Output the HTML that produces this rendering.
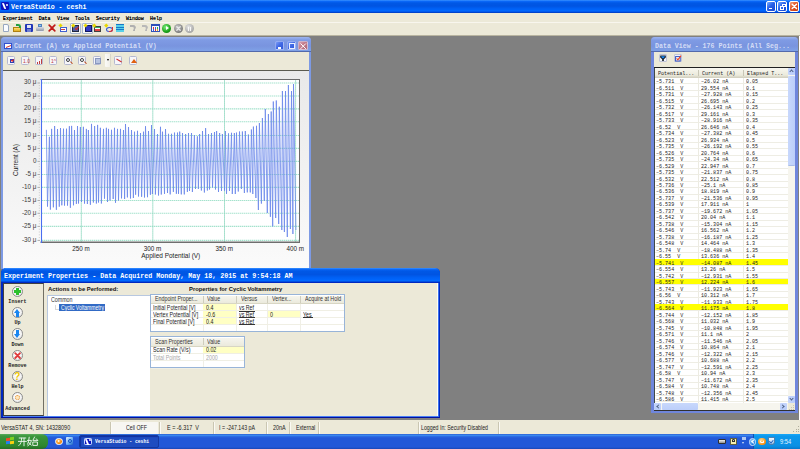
<!DOCTYPE html><html><head><meta charset="utf-8"><style>
*{margin:0;padding:0;box-sizing:border-box}
html,body{width:800px;height:449px;overflow:hidden;background:#808080;font-family:"Liberation Sans",sans-serif}
.a{position:absolute}
.mono{font-family:"Liberation Mono",monospace}
.t{white-space:pre;position:absolute;line-height:1}
</style></head><body>

<div class="a" style="left:0;top:0;width:800px;height:13px;background:linear-gradient(#3d94ff 0,#0a68f8 1.3px,#0058e6 3px,#0054e2 6px,#0060f4 8.5px,#0068ff 11px,#0048d8 12.2px,#0038b8 13px)"></div>
<div class="t mono" style="left:11.00px;top:3.71px;font-size:6.62px;color:#fff;font-weight:bold;transform:scaleX(1.0);transform-origin:0 0;">VersaStudio - ceshi</div>
<div class="a" style="left:0;top:13px;width:800px;height:23px;background:#ece9d8"></div>
<div class="a" style="left:0;top:22px;width:800px;height:1px;background:#f8f6ee"></div>
<div class="t mono" style="left:3.00px;top:16.54px;font-size:4.95px;color:#000;font-weight:400;transform:scaleX(1.0);transform-origin:0 0;text-shadow:0 0 0.3px #000">Experiment</div>
<div class="t mono" style="left:38.70px;top:16.54px;font-size:4.95px;color:#000;font-weight:400;transform:scaleX(1.0);transform-origin:0 0;text-shadow:0 0 0.3px #000">Data</div>
<div class="t mono" style="left:57.00px;top:16.54px;font-size:4.95px;color:#000;font-weight:400;transform:scaleX(1.0);transform-origin:0 0;text-shadow:0 0 0.3px #000">View</div>
<div class="t mono" style="left:75.00px;top:16.54px;font-size:4.95px;color:#000;font-weight:400;transform:scaleX(1.0);transform-origin:0 0;text-shadow:0 0 0.3px #000">Tools</div>
<div class="t mono" style="left:96.00px;top:16.54px;font-size:4.95px;color:#000;font-weight:400;transform:scaleX(1.0);transform-origin:0 0;text-shadow:0 0 0.3px #000">Security</div>
<div class="t mono" style="left:126.00px;top:16.54px;font-size:4.95px;color:#000;font-weight:400;transform:scaleX(1.0);transform-origin:0 0;text-shadow:0 0 0.3px #000">Window</div>
<div class="t mono" style="left:150.00px;top:16.54px;font-size:4.95px;color:#000;font-weight:400;transform:scaleX(1.0);transform-origin:0 0;text-shadow:0 0 0.3px #000">Help</div>
<div class="a" style="left:0;top:36px;width:800px;height:384px;background:#808080"></div>
<div class="a" style="left:799px;top:36px;width:1px;height:384px;background:#fff"></div>
<div class="a" style="left:0;top:420px;width:800px;height:13px;background:#ece9d8"></div>
<div class="a" style="left:1px;top:37px;width:310px;height:232px;background:#7d9ae4;border-radius:4px 4px 0 0"></div>
<div class="a" style="left:1px;top:37px;width:310px;height:15px;border-radius:4px 4px 0 0;background:linear-gradient(#9db4ee,#7f9be4 20%,#7994df 60%,#7ea0e6 90%,#3e4f8e)"></div>
<div class="a" style="left:4px;top:43px;width:8px;height:6px;background:#fff;border:1px solid #3050d0"></div>
<div class="a" style="left:6px;top:45px;width:5px;height:2px;border-bottom:1px solid #d03030;transform:skewY(-20deg)"></div>
<div class="t mono" style="left:14.00px;top:42.91px;font-size:6.62px;color:#d4ddf6;font-weight:bold;transform:scaleX(1.0);transform-origin:0 0;">Current (A) vs Applied Potential (V)</div>
<div class="a" style="left:274.6px;top:41.1px;width:9.6px;height:9px;border-radius:1.5px;border:0.6px solid rgba(220,230,255,.55);background:linear-gradient(135deg,#7c9cf4,#4068e4 50%,#3058d8)"><div class="a" style="left:2.3px;top:5.2px;width:3.4px;height:1.5px;background:#fff"></div></div>
<div class="a" style="left:286.6px;top:41.1px;width:9.6px;height:9px;border-radius:1.5px;border:0.6px solid rgba(220,230,255,.55);background:linear-gradient(135deg,#7c9cf4,#4068e4 50%,#3058d8)"><div class="a" style="left:1.6px;top:1.4px;width:5.6px;height:5.6px;border:0.8px solid #e8eeff;border-top-width:1.6px"></div></div>
<div class="a" style="left:298.1px;top:41.1px;width:9.6px;height:9px;border-radius:1.5px;border:0.6px solid rgba(220,230,255,.55);background:linear-gradient(135deg,#d8a0b0,#c07888 50%,#b06878)"><svg class="a" style="left:0px;top:0px" width="8.4" height="8.4" viewBox="0 0 8.4 8.4"><path d="M1.8 1.8 L6.6000000000000005 6.6000000000000005 M6.6000000000000005 1.8 L1.8 6.6000000000000005" stroke="#fff" stroke-width="1.0" stroke-linecap="round"/></svg></div>
<div class="a" style="left:3px;top:52px;width:306px;height:19px;background:#ece9d8;border-bottom:1px solid #5a5a50"></div>
<div class="a" style="left:3px;top:71px;width:306px;height:198px;background:linear-gradient(#e9e9e9,#f3f3f3 60%,#fbfbfb)"></div>
<div class="a" style="left:7px;top:56.4px;width:8.2px;height:8.2px;border:1px solid #b4b8d0;border-radius:1.5px;background:#f6f6fa"><div class="a" style="left:1.5px;top:2px;width:4px;height:4px;border:1px solid #3040b0;background:#fff"></div><div class="a" style="left:3px;top:1.5px;width:3px;height:2px;border-left:1px solid #e02020;border-bottom:1px solid #e02020;transform:rotate(-45deg)"></div></div>
<div class="a" style="left:21px;top:56.4px;width:8.2px;height:8.2px;border:1px solid #b4b8d0;border-radius:1.5px;background:#f6f6fa"><div class="a" style="left:1px;top:1.5px;width:6px;height:5px;color:#c04040;font-size:5px;line-height:5px;font-family:Liberation Sans">1.0</div></div>
<div class="a" style="left:35px;top:56.4px;width:8.2px;height:8.2px;border:1px solid #b4b8d0;border-radius:1.5px;background:#f6f6fa"><div class="a" style="left:1px;top:5px;width:1.2px;height:1.5px;background:#c04040"></div><div class="a" style="left:3px;top:4px;width:1.2px;height:2.5px;background:#c04040"></div><div class="a" style="left:5px;top:2px;width:1.2px;height:4.5px;background:#c04040"></div></div>
<div class="a" style="left:49px;top:56.4px;width:8.2px;height:8.2px;border:1px solid #b4b8d0;border-radius:1.5px;background:#f6f6fa"><div class="a" style="left:1px;top:1.5px;width:6px;height:5px;color:#c04040;font-size:5px;line-height:5px;font-family:Liberation Sans">1^</div></div>
<div class="a" style="left:64px;top:56.4px;width:8.2px;height:8.2px;border:1px solid #b4b8d0;border-radius:1.5px;background:#f6f6fa"><div class="a" style="left:1px;top:1px;width:4px;height:4px;border:1px solid #404040;border-radius:50%;background:#e8f0ff"></div><div class="a" style="left:4.5px;top:4.5px;width:2.5px;height:1.2px;background:#c05020;transform:rotate(45deg)"></div></div>
<div class="a" style="left:78px;top:56.4px;width:8.2px;height:8.2px;border:1px solid #b4b8d0;border-radius:1.5px;background:#f6f6fa"><div class="a" style="left:1px;top:1px;width:4px;height:4px;border:1px solid #404040;border-radius:50%;background:#fff"></div><div class="a" style="left:4.5px;top:4.5px;width:2.5px;height:1.2px;background:#c05020;transform:rotate(45deg)"></div></div>
<div class="a" style="left:93px;top:56.4px;width:8.2px;height:8.2px;border:1px solid #b4b8d0;border-radius:1.5px;background:#f6f6fa"><div class="a" style="left:0.5px;top:0.5px;width:6px;height:6px;background:#b8c4e0;border:0.5px solid #8898c0"></div></div>
<div class="a" style="left:114px;top:56.4px;width:8.2px;height:8.2px;border:1px solid #b4b8d0;border-radius:1.5px;background:#f6f6fa"><div class="a" style="left:1px;top:2.5px;width:6px;height:1.2px;background:#d03030;transform:rotate(30deg)"></div></div>
<div class="a" style="left:129px;top:56.4px;width:8.2px;height:8.2px;border:1px solid #b4b8d0;border-radius:1.5px;background:#f6f6fa"><div class="a" style="left:1px;top:2px;width:0;height:0;border-left:3px solid transparent;border-right:3px solid transparent;border-bottom:4px solid #e06010"></div></div>
<div class="a" style="left:105px;top:53.8px;width:5.7px;height:13.6px;background:linear-gradient(90deg,#fbfbf8,#f0efe8);border-right:1px solid #d8d6c8;border-radius:0 0 1px 1px"></div>
<div class="a" style="left:107px;top:59px;width:0;height:0;border-left:1.5px solid transparent;border-right:1.5px solid transparent;border-top:2px solid #000"></div>
<svg class="a" style="left:0;top:0" width="800" height="449" viewBox="0 0 800 449"><rect x="40.5" y="79" width="259.5" height="164" fill="#fff"/><line x1="42.3" y1="83.0" x2="299" y2="83.0" stroke="#7fd6b8" stroke-width="1.1" stroke-dasharray="1 1"/><line x1="42.3" y1="96.0" x2="299" y2="96.0" stroke="#7fd6b8" stroke-width="1.1" stroke-dasharray="1 1"/><line x1="42.3" y1="108.9" x2="299" y2="108.9" stroke="#7fd6b8" stroke-width="1.1" stroke-dasharray="1 1"/><line x1="42.3" y1="121.8" x2="299" y2="121.8" stroke="#7fd6b8" stroke-width="1.1" stroke-dasharray="1 1"/><line x1="42.3" y1="135.5" x2="299" y2="135.5" stroke="#7fd6b8" stroke-width="1.1" stroke-dasharray="1 1"/><line x1="42.3" y1="148.4" x2="299" y2="148.4" stroke="#7fd6b8" stroke-width="1.1" stroke-dasharray="1 1"/><line x1="42.3" y1="161.4" x2="299" y2="161.4" stroke="#7fd6b8" stroke-width="1.1" stroke-dasharray="1 1"/><line x1="42.3" y1="174.5" x2="299" y2="174.5" stroke="#7fd6b8" stroke-width="1.1" stroke-dasharray="1 1"/><line x1="42.3" y1="187.4" x2="299" y2="187.4" stroke="#7fd6b8" stroke-width="1.1" stroke-dasharray="1 1"/><line x1="42.3" y1="200.45" x2="299" y2="200.45" stroke="#7fd6b8" stroke-width="1.1" stroke-dasharray="1 1"/><line x1="42.3" y1="213.3" x2="299" y2="213.3" stroke="#7fd6b8" stroke-width="1.1" stroke-dasharray="1 1"/><line x1="42.3" y1="226.4" x2="299" y2="226.4" stroke="#7fd6b8" stroke-width="1.1" stroke-dasharray="1 1"/><line x1="42.3" y1="240.4" x2="299" y2="240.4" stroke="#7fd6b8" stroke-width="1.1" stroke-dasharray="1 1"/><line x1="81.3" y1="80.3" x2="81.3" y2="242" stroke="#8ed8bf" stroke-width="1" stroke-dasharray="1.5 0.5"/><line x1="152.8" y1="80.3" x2="152.8" y2="242" stroke="#8ed8bf" stroke-width="1" stroke-dasharray="1.5 0.5"/><line x1="224.5" y1="80.3" x2="224.5" y2="242" stroke="#8ed8bf" stroke-width="1" stroke-dasharray="1.5 0.5"/><line x1="295.6" y1="80.3" x2="295.6" y2="242" stroke="#8ed8bf" stroke-width="1" stroke-dasharray="1.5 0.5"/><polyline points="46.40,129.80 47.50,206.60 49.40,136.80 50.40,209.60 51.60,128.90 53.40,207.30 54.60,126.00 56.40,209.80 57.50,129.00 59.30,206.70 60.50,128.00 61.80,205.30 63.50,128.70 64.50,205.60 66.50,128.70 67.50,205.60 69.40,126.20 70.40,207.80 71.60,125.90 73.50,205.30 74.50,130.00 76.40,203.90 77.50,126.00 78.50,203.50 80.40,127.00 81.50,202.00 83.40,126.80 84.50,203.60 86.40,128.90 87.40,204.00 88.40,130.00 90.40,204.80 91.50,123.90 93.40,202.50 94.60,126.00 96.40,203.50 97.60,124.90 98.50,202.50 100.40,127.80 101.40,203.50 103.50,128.90 104.50,198.70 106.40,127.80 107.50,202.00 108.50,128.90 110.00,200.50 111.50,129.80 113.20,199.00 114.50,127.80 115.50,202.80 117.50,128.90 118.50,200.50 120.50,128.90 121.50,198.40 123.50,130.00 124.60,199.00 125.50,124.00 127.40,197.40 128.50,127.00 130.50,198.50 131.50,130.00 133.40,198.00 134.50,131.70 135.60,194.70 137.50,130.80 138.50,196.50 140.50,133.00 141.60,196.80 143.50,131.70 144.50,197.50 145.50,126.20 147.50,197.20 148.50,131.00 150.40,194.80 151.50,125.00 152.40,194.00 154.50,129.00 155.40,194.50 157.50,134.00 158.50,195.50 160.50,126.80 161.30,194.50 162.50,131.70 164.50,193.90 165.50,129.00 167.50,193.00 168.50,133.80 170.20,194.40 171.50,133.80 173.40,191.90 174.50,132.60 176.40,193.80 177.50,132.60 178.50,193.90 179.70,131.60 181.30,194.40 182.50,133.00 184.30,194.40 185.60,134.00 187.40,191.90 188.50,133.00 189.50,191.00 191.50,133.00 192.40,192.00 194.40,135.00 195.50,189.00 197.40,136.30 198.40,189.00 199.60,134.00 201.40,190.50 202.50,131.00 204.40,192.50 205.60,128.10 207.40,190.50 208.50,134.00 209.50,189.50 211.50,133.00 212.50,187.50 214.50,132.00 215.50,189.50 216.60,131.00 218.50,192.00 219.60,133.00 221.50,191.00 222.40,134.00 224.50,190.70 225.40,131.00 226.50,193.90 228.50,133.40 229.50,191.00 231.50,132.80 232.30,194.00 234.40,133.00 235.30,194.00 236.50,132.60 238.30,191.50 239.50,131.50 241.40,189.00 242.40,131.50 244.40,193.00 245.30,131.00 247.30,192.40 248.40,134.50 250.30,192.40 251.40,129.50 252.80,194.00 253.40,126.60 255.90,198.00 256.50,125.80 258.40,210.00 259.40,123.00 261.40,203.60 262.40,118.00 264.30,201.00 265.30,109.00 267.30,213.00 268.40,114.00 270.40,216.80 271.20,111.50 272.70,226.40 273.30,101.50 275.70,218.00 276.30,100.50 278.70,224.00 279.30,106.70 281.80,230.00 282.40,91.00 284.40,232.00 285.50,91.00 287.30,237.00 288.40,85.00 290.40,229.00 291.50,91.00 292.90,234.00 293.50,84.00 295.90,230.00" fill="none" stroke="#6a86ea" stroke-width="0.8"/><line x1="40.5" y1="79.5" x2="300" y2="79.5" stroke="#6a6a6a" stroke-width="1"/><line x1="299.5" y1="79" x2="299.5" y2="243" stroke="#6a6a6a" stroke-width="1"/><line x1="40.5" y1="242.25" x2="300" y2="242.25" stroke="#6e6e6e" stroke-width="1.5"/><line x1="41.5" y1="79" x2="41.5" y2="243" stroke="#4a6ef0" stroke-width="1.1"/><line x1="37.5" y1="83.00" x2="40" y2="83.00" stroke="#999" stroke-width="0.8"/><line x1="38.8" y1="85.60" x2="40" y2="85.60" stroke="#bbb" stroke-width="0.6"/><line x1="38.8" y1="88.20" x2="40" y2="88.20" stroke="#bbb" stroke-width="0.6"/><line x1="38.8" y1="90.80" x2="40" y2="90.80" stroke="#bbb" stroke-width="0.6"/><line x1="38.8" y1="93.40" x2="40" y2="93.40" stroke="#bbb" stroke-width="0.6"/><line x1="37.5" y1="96.00" x2="40" y2="96.00" stroke="#999" stroke-width="0.8"/><line x1="38.8" y1="98.58" x2="40" y2="98.58" stroke="#bbb" stroke-width="0.6"/><line x1="38.8" y1="101.16" x2="40" y2="101.16" stroke="#bbb" stroke-width="0.6"/><line x1="38.8" y1="103.74" x2="40" y2="103.74" stroke="#bbb" stroke-width="0.6"/><line x1="38.8" y1="106.32" x2="40" y2="106.32" stroke="#bbb" stroke-width="0.6"/><line x1="37.5" y1="108.90" x2="40" y2="108.90" stroke="#999" stroke-width="0.8"/><line x1="38.8" y1="111.48" x2="40" y2="111.48" stroke="#bbb" stroke-width="0.6"/><line x1="38.8" y1="114.06" x2="40" y2="114.06" stroke="#bbb" stroke-width="0.6"/><line x1="38.8" y1="116.64" x2="40" y2="116.64" stroke="#bbb" stroke-width="0.6"/><line x1="38.8" y1="119.22" x2="40" y2="119.22" stroke="#bbb" stroke-width="0.6"/><line x1="37.5" y1="121.80" x2="40" y2="121.80" stroke="#999" stroke-width="0.8"/><line x1="38.8" y1="124.54" x2="40" y2="124.54" stroke="#bbb" stroke-width="0.6"/><line x1="38.8" y1="127.28" x2="40" y2="127.28" stroke="#bbb" stroke-width="0.6"/><line x1="38.8" y1="130.02" x2="40" y2="130.02" stroke="#bbb" stroke-width="0.6"/><line x1="38.8" y1="132.76" x2="40" y2="132.76" stroke="#bbb" stroke-width="0.6"/><line x1="37.5" y1="135.50" x2="40" y2="135.50" stroke="#999" stroke-width="0.8"/><line x1="38.8" y1="138.08" x2="40" y2="138.08" stroke="#bbb" stroke-width="0.6"/><line x1="38.8" y1="140.66" x2="40" y2="140.66" stroke="#bbb" stroke-width="0.6"/><line x1="38.8" y1="143.24" x2="40" y2="143.24" stroke="#bbb" stroke-width="0.6"/><line x1="38.8" y1="145.82" x2="40" y2="145.82" stroke="#bbb" stroke-width="0.6"/><line x1="37.5" y1="148.40" x2="40" y2="148.40" stroke="#999" stroke-width="0.8"/><line x1="38.8" y1="151.00" x2="40" y2="151.00" stroke="#bbb" stroke-width="0.6"/><line x1="38.8" y1="153.60" x2="40" y2="153.60" stroke="#bbb" stroke-width="0.6"/><line x1="38.8" y1="156.20" x2="40" y2="156.20" stroke="#bbb" stroke-width="0.6"/><line x1="38.8" y1="158.80" x2="40" y2="158.80" stroke="#bbb" stroke-width="0.6"/><line x1="37.5" y1="161.40" x2="40" y2="161.40" stroke="#999" stroke-width="0.8"/><line x1="38.8" y1="164.02" x2="40" y2="164.02" stroke="#bbb" stroke-width="0.6"/><line x1="38.8" y1="166.64" x2="40" y2="166.64" stroke="#bbb" stroke-width="0.6"/><line x1="38.8" y1="169.26" x2="40" y2="169.26" stroke="#bbb" stroke-width="0.6"/><line x1="38.8" y1="171.88" x2="40" y2="171.88" stroke="#bbb" stroke-width="0.6"/><line x1="37.5" y1="174.50" x2="40" y2="174.50" stroke="#999" stroke-width="0.8"/><line x1="38.8" y1="177.08" x2="40" y2="177.08" stroke="#bbb" stroke-width="0.6"/><line x1="38.8" y1="179.66" x2="40" y2="179.66" stroke="#bbb" stroke-width="0.6"/><line x1="38.8" y1="182.24" x2="40" y2="182.24" stroke="#bbb" stroke-width="0.6"/><line x1="38.8" y1="184.82" x2="40" y2="184.82" stroke="#bbb" stroke-width="0.6"/><line x1="37.5" y1="187.40" x2="40" y2="187.40" stroke="#999" stroke-width="0.8"/><line x1="38.8" y1="190.01" x2="40" y2="190.01" stroke="#bbb" stroke-width="0.6"/><line x1="38.8" y1="192.62" x2="40" y2="192.62" stroke="#bbb" stroke-width="0.6"/><line x1="38.8" y1="195.23" x2="40" y2="195.23" stroke="#bbb" stroke-width="0.6"/><line x1="38.8" y1="197.84" x2="40" y2="197.84" stroke="#bbb" stroke-width="0.6"/><line x1="37.5" y1="200.45" x2="40" y2="200.45" stroke="#999" stroke-width="0.8"/><line x1="38.8" y1="203.02" x2="40" y2="203.02" stroke="#bbb" stroke-width="0.6"/><line x1="38.8" y1="205.59" x2="40" y2="205.59" stroke="#bbb" stroke-width="0.6"/><line x1="38.8" y1="208.16" x2="40" y2="208.16" stroke="#bbb" stroke-width="0.6"/><line x1="38.8" y1="210.73" x2="40" y2="210.73" stroke="#bbb" stroke-width="0.6"/><line x1="37.5" y1="213.30" x2="40" y2="213.30" stroke="#999" stroke-width="0.8"/><line x1="38.8" y1="215.92" x2="40" y2="215.92" stroke="#bbb" stroke-width="0.6"/><line x1="38.8" y1="218.54" x2="40" y2="218.54" stroke="#bbb" stroke-width="0.6"/><line x1="38.8" y1="221.16" x2="40" y2="221.16" stroke="#bbb" stroke-width="0.6"/><line x1="38.8" y1="223.78" x2="40" y2="223.78" stroke="#bbb" stroke-width="0.6"/><line x1="37.5" y1="226.40" x2="40" y2="226.40" stroke="#999" stroke-width="0.8"/><line x1="38.8" y1="229.20" x2="40" y2="229.20" stroke="#bbb" stroke-width="0.6"/><line x1="38.8" y1="232.00" x2="40" y2="232.00" stroke="#bbb" stroke-width="0.6"/><line x1="38.8" y1="234.80" x2="40" y2="234.80" stroke="#bbb" stroke-width="0.6"/><line x1="38.8" y1="237.60" x2="40" y2="237.60" stroke="#bbb" stroke-width="0.6"/><line x1="37.5" y1="240.40" x2="40" y2="240.40" stroke="#999" stroke-width="0.8"/></svg>
<div class="t" style="right:763.5px;top:79.40px;font-size:6.3px;color:#3a3a3a">30 μ</div>
<div class="t" style="right:763.5px;top:92.40px;font-size:6.3px;color:#3a3a3a">25 μ</div>
<div class="t" style="right:763.5px;top:105.30px;font-size:6.3px;color:#3a3a3a">20 μ</div>
<div class="t" style="right:763.5px;top:118.20px;font-size:6.3px;color:#3a3a3a">15 μ</div>
<div class="t" style="right:763.5px;top:131.90px;font-size:6.3px;color:#3a3a3a">10 μ</div>
<div class="t" style="right:763.5px;top:144.80px;font-size:6.3px;color:#3a3a3a">5 μ</div>
<div class="t" style="right:763.5px;top:157.80px;font-size:6.3px;color:#3a3a3a">0</div>
<div class="t" style="right:763.5px;top:170.90px;font-size:6.3px;color:#3a3a3a">-5 μ</div>
<div class="t" style="right:763.5px;top:183.80px;font-size:6.3px;color:#3a3a3a">-10 μ</div>
<div class="t" style="right:763.5px;top:196.85px;font-size:6.3px;color:#3a3a3a">-15 μ</div>
<div class="t" style="right:763.5px;top:209.70px;font-size:6.3px;color:#3a3a3a">-20 μ</div>
<div class="t" style="right:763.5px;top:222.80px;font-size:6.3px;color:#3a3a3a">-25 μ</div>
<div class="t" style="right:763.5px;top:236.80px;font-size:6.3px;color:#3a3a3a">-30 μ</div>
<div class="t" style="left:72.3px;top:245.5px;width:24px;font-size:6.3px;color:#222">250 m</div>
<div class="t" style="left:143.8px;top:245.5px;width:24px;font-size:6.3px;color:#222">300 m</div>
<div class="t" style="left:215.5px;top:245.5px;width:24px;font-size:6.3px;color:#222">350 m</div>
<div class="t" style="left:286.6px;top:245.5px;width:24px;font-size:6.3px;color:#222">400 m</div>
<div class="t" style="left:141.3px;top:252.5px;font-size:6.47px;color:#222">Applied Potential (V)</div>
<div class="t" style="left:-0.5px;top:156.5px;width:32px;font-size:6.47px;color:#222;transform:rotate(-90deg);transform-origin:16px 3px;text-align:center">Current (A)</div>
<div class="a" style="left:0.9px;top:267.8px;width:438.7px;height:150.2px;background:#0028c0;border-radius:5px 5px 0 0"></div>
<div class="a" style="left:0.9px;top:267.8px;width:438.7px;height:14.7px;border-radius:5px 5px 0 0;background:linear-gradient(#3d94ff 0,#0a68f8 1.3px,#0058e6 3px,#0054e2 6.5px,#0060f4 9.5px,#0068ff 12.5px,#0048d8 13.8px,#0038b8 14.7px)"></div>
<div class="t mono" style="left:4.00px;top:272.71px;font-size:6.62px;color:#fff;font-weight:bold;transform:scaleX(1.01);transform-origin:0 0;">Experiment Properties - Data Acquired Monday, May 18, 2015 at 9:54:18 AM</div>
<div class="a" style="left:3px;top:282.5px;width:435px;height:133.3px;background:#ece9d8;border-right:0.8px solid #fffef4"></div>
<div class="a" style="left:3px;top:415.8px;width:435.8px;height:0.9px;background:#4a80f4"></div>
<div class="a" style="left:438px;top:282.5px;width:0.9px;height:134px;background:#3a70f0"></div>
<div class="a" style="left:0.9px;top:417.2px;width:438.7px;height:0.8px;background:#0010a0"></div>
<div class="a" style="left:3px;top:282.7px;width:40.6px;height:133.1px;border-left:0.8px solid #404040;border-top:0.8px solid #404040;border-right:0.8px solid #716f64;border-bottom:0.8px solid #404040"></div>
<div class="a" style="left:11.9px;top:285.8px;width:11.2px;height:11.2px;border-radius:50%;border:1px solid #8c8c8c;background:radial-gradient(circle at 40% 35%,#fff,#f2f2f2 60%,#d0d0d0)"><div class="a" style="left:1.2px;top:3.4px;width:6.8px;height:2.6px;background:#2cc02c"></div><div class="a" style="left:3.3px;top:1.3px;width:2.6px;height:6.8px;background:#2cc02c"></div></div>
<div class="a" style="left:11.9px;top:307.3px;width:11.2px;height:11.2px;border-radius:50%;border:1px solid #8c8c8c;background:radial-gradient(circle at 40% 35%,#fff,#f2f2f2 60%,#d0d0d0)"><div class="a" style="left:0.8px;top:0.6px;width:0;height:0;border-left:3.8px solid transparent;border-right:3.8px solid transparent;border-bottom:4px solid #1a86f0"></div><div class="a" style="left:3.1px;top:4.4px;width:3px;height:4px;background:#1a86f0"></div></div>
<div class="a" style="left:11.9px;top:328.4px;width:11.2px;height:11.2px;border-radius:50%;border:1px solid #8c8c8c;background:radial-gradient(circle at 40% 35%,#fff,#f2f2f2 60%,#d0d0d0)"><div class="a" style="left:3.1px;top:1px;width:3px;height:4px;background:#1a86f0"></div><div class="a" style="left:0.8px;top:4.6px;width:0;height:0;border-left:3.8px solid transparent;border-right:3.8px solid transparent;border-top:4px solid #1a86f0"></div></div>
<div class="a" style="left:11.9px;top:350.1px;width:11.2px;height:11.2px;border-radius:50%;border:1px solid #8c8c8c;background:radial-gradient(circle at 40% 35%,#fff,#f2f2f2 60%,#d0d0d0)"><svg class="a" style="left:0px;top:0px" width="9.2" height="9.2" viewBox="0 0 9.2 9.2"><path d="M2.2 2.2 L6.999999999999999 6.999999999999999 M6.999999999999999 2.2 L2.2 6.999999999999999" stroke="#e03a3a" stroke-width="1.8" stroke-linecap="round"/></svg></div>
<div class="a" style="left:11.9px;top:371.2px;width:11.2px;height:11.2px;border-radius:50%;border:1px solid #8c8c8c;background:radial-gradient(circle at 40% 35%,#fff,#f2f2f2 60%,#d0d0d0)"><div class="a" style="left:-0.5px;top:-1px;width:10px;height:11px;color:#f0c800;font-size:10px;line-height:11px;text-align:center;font-weight:bold;font-family:Liberation Sans">?</div></div>
<div class="a" style="left:11.9px;top:392.0px;width:11.2px;height:11.2px;border-radius:50%;border:1px solid #8c8c8c;background:radial-gradient(circle at 40% 35%,#fff,#f2f2f2 60%,#d0d0d0)"><div class="a" style="left:1.8px;top:1.8px;width:5.6px;height:5.6px;border-radius:50%;border:1.6px dotted #e89030;background:#fde8c0"></div></div>
<div class="t mono" style="left:2.5px;width:30px;text-align:center;top:299.7px;font-size:5.1px;font-weight:bold;color:#222">Insert</div>
<div class="t mono" style="left:2.5px;width:30px;text-align:center;top:321.0px;font-size:5.1px;font-weight:bold;color:#222">Up</div>
<div class="t mono" style="left:2.5px;width:30px;text-align:center;top:342.6px;font-size:5.1px;font-weight:bold;color:#222">Down</div>
<div class="t mono" style="left:2.5px;width:30px;text-align:center;top:363.8px;font-size:5.1px;font-weight:bold;color:#222">Remove</div>
<div class="t mono" style="left:2.5px;width:30px;text-align:center;top:385.4px;font-size:5.1px;font-weight:bold;color:#222">Help</div>
<div class="t mono" style="left:2.5px;width:30px;text-align:center;top:406.5px;font-size:5.1px;font-weight:bold;color:#222">Advanced</div>
<div class="t" style="left:47.50px;top:286.11px;font-size:6.2px;color:#111;font-weight:bold;transform:scaleX(0.95);transform-origin:0 0;">Actions to be Performed:</div>
<div class="a" style="left:46.5px;top:295px;width:103.4px;height:120.8px;background:#fff;border-left:1px solid #b8c8e0;border-top:1px solid #b8c8e0"></div>
<div class="t" style="left:51.00px;top:297.12px;font-size:6.4px;color:#333;font-weight:400;transform:scaleX(0.83);transform-origin:0 0;">Common</div>
<div class="a" style="left:54.5px;top:304.5px;width:4px;height:5px;border-left:0.8px solid #d8d8d8;border-bottom:0.8px solid #d8d8d8"></div>
<div class="a" style="left:59px;top:303.6px;width:45.5px;height:7.6px;background:#316ac5"></div>
<div class="t" style="left:60.50px;top:304.92px;font-size:6.4px;color:#fff;font-weight:400;transform:scaleX(0.79);transform-origin:0 0;">Cyclic Voltammetry</div>
<div class="t" style="left:188.70px;top:286.01px;font-size:6.2px;color:#111;font-weight:bold;transform:scaleX(0.94);transform-origin:0 0;">Properties for Cyclic Voltammetry</div>
<div class="a" style="left:150.2px;top:293.8px;width:195.3px;height:38.6px;background:#fff;border:1px solid #98b4d8"></div>
<div class="a" style="left:151.2px;top:294.8px;width:193.3px;height:9.3px;background:linear-gradient(#f6f5ee,#ebeadc);border-top:1px solid #fff;border-bottom:1px solid #d8d6c4"></div>
<div class="a" style="left:202.5px;top:296.3px;width:0.8px;height:6.300000000000001px;background:#cfcdbd"></div>
<div class="a" style="left:202.5px;top:304.1px;width:0.8px;height:27.3px;background:#f0efe6"></div>
<div class="a" style="left:236.3px;top:296.3px;width:0.8px;height:6.300000000000001px;background:#cfcdbd"></div>
<div class="a" style="left:236.3px;top:304.1px;width:0.8px;height:27.3px;background:#f0efe6"></div>
<div class="a" style="left:267.3px;top:296.3px;width:0.8px;height:6.300000000000001px;background:#cfcdbd"></div>
<div class="a" style="left:267.3px;top:304.1px;width:0.8px;height:27.3px;background:#f0efe6"></div>
<div class="a" style="left:300.3px;top:296.3px;width:0.8px;height:6.300000000000001px;background:#cfcdbd"></div>
<div class="a" style="left:300.3px;top:304.1px;width:0.8px;height:27.3px;background:#f0efe6"></div>
<div class="a" style="left:151.2px;top:310.30px;width:193.3px;height:0.8px;background:#f0efe4"></div>
<div class="a" style="left:151.2px;top:317.30px;width:193.3px;height:0.8px;background:#f0efe4"></div>
<div class="a" style="left:151.2px;top:324.30px;width:193.3px;height:0.8px;background:#f0efe4"></div>
<div class="a" style="left:151.2px;top:331.30px;width:193.3px;height:0.8px;background:#f0efe4"></div>
<div class="a" style="left:203.3px;top:304.10px;width:33.0px;height:6.2px;background:#ffffc4"></div>
<div class="a" style="left:203.3px;top:311.10px;width:33.0px;height:6.2px;background:#ffffc4"></div>
<div class="a" style="left:203.3px;top:318.10px;width:33.0px;height:6.2px;background:#ffffc4"></div>
<div class="a" style="left:268.1px;top:311.10px;width:32.19999999999999px;height:6.2px;background:#ffffc4"></div>
<div class="t" style="left:155.00px;top:296.37px;font-size:6.4px;color:#333;font-weight:400;transform:scaleX(0.83);transform-origin:0 0;">Endpoint Proper...</div>
<div class="t" style="left:207.30px;top:296.37px;font-size:6.4px;color:#333;font-weight:400;transform:scaleX(0.83);transform-origin:0 0;">Value</div>
<div class="t" style="left:241.10px;top:296.37px;font-size:6.4px;color:#333;font-weight:400;transform:scaleX(0.83);transform-origin:0 0;">Versus</div>
<div class="t" style="left:272.10px;top:296.37px;font-size:6.4px;color:#333;font-weight:400;transform:scaleX(0.83);transform-origin:0 0;">Vertex...</div>
<div class="t" style="left:305.10px;top:296.37px;font-size:6.4px;color:#333;font-weight:400;transform:scaleX(0.83);transform-origin:0 0;">Acquire at Hold</div>
<div class="t" style="left:153.20px;top:304.72px;font-size:6.4px;color:#222;font-weight:400;transform:scaleX(0.83);transform-origin:0 0;">Initial Potential [V]</div>
<div class="t" style="left:205.50px;top:304.72px;font-size:6.4px;color:#222;font-weight:400;transform:scaleX(0.83);transform-origin:0 0;">0.4</div>
<div class="t" style="left:239.30px;top:304.72px;font-size:6.4px;color:#222;font-weight:400;transform:scaleX(0.83);transform-origin:0 0;">vs Ref</div>
<div class="t" style="left:153.20px;top:311.72px;font-size:6.4px;color:#222;font-weight:400;transform:scaleX(0.83);transform-origin:0 0;">Vertex Potential [V]</div>
<div class="t" style="left:205.50px;top:311.72px;font-size:6.4px;color:#222;font-weight:400;transform:scaleX(0.83);transform-origin:0 0;">-0.6</div>
<div class="t" style="left:239.30px;top:311.72px;font-size:6.4px;color:#222;font-weight:400;transform:scaleX(0.83);transform-origin:0 0;">vs Ref</div>
<div class="t" style="left:270.30px;top:311.72px;font-size:6.4px;color:#222;font-weight:400;transform:scaleX(0.83);transform-origin:0 0;">0</div>
<div class="t" style="left:303.30px;top:311.72px;font-size:6.4px;color:#222;font-weight:400;transform:scaleX(0.83);transform-origin:0 0;">Yes</div>
<div class="t" style="left:153.20px;top:318.72px;font-size:6.4px;color:#222;font-weight:400;transform:scaleX(0.83);transform-origin:0 0;">Final Potential [V]</div>
<div class="t" style="left:205.50px;top:318.72px;font-size:6.4px;color:#222;font-weight:400;transform:scaleX(0.83);transform-origin:0 0;">0.4</div>
<div class="t" style="left:239.30px;top:318.72px;font-size:6.4px;color:#222;font-weight:400;transform:scaleX(0.83);transform-origin:0 0;">vs Ref</div>
<div class="a" style="left:150.2px;top:293.8px;width:195.3px;height:38.6px;border:1px solid #98b4d8"></div>
<div class="a" style="left:239.3px;top:310.6px;width:15.6px;height:0.7px;background:#333"></div>
<div class="a" style="left:239.3px;top:317.4px;width:15.6px;height:0.7px;background:#333"></div>
<div class="a" style="left:239.3px;top:324.2px;width:15.6px;height:0.7px;background:#333"></div>
<div class="a" style="left:303.3px;top:317.4px;width:9.4px;height:0.7px;background:#333"></div>
<div class="a" style="left:150.2px;top:335.5px;width:94.5px;height:32.2px;background:#fff;border:1px solid #98b4d8"></div>
<div class="a" style="left:151.2px;top:336.5px;width:92.5px;height:10.2px;background:linear-gradient(#f6f5ee,#ebeadc);border-top:1px solid #fff;border-bottom:1px solid #d8d6c4"></div>
<div class="a" style="left:202.6px;top:338.0px;width:0.8px;height:7.199999999999999px;background:#cfcdbd"></div>
<div class="a" style="left:202.6px;top:346.7px;width:0.8px;height:20.000000000000004px;background:#f0efe6"></div>
<div class="a" style="left:151.2px;top:353.10px;width:92.5px;height:0.8px;background:#f0efe4"></div>
<div class="a" style="left:151.2px;top:360.30px;width:92.5px;height:0.8px;background:#f0efe4"></div>
<div class="a" style="left:151.2px;top:367.50px;width:92.5px;height:0.8px;background:#f0efe4"></div>
<div class="a" style="left:203.4px;top:346.70px;width:40.49999999999997px;height:6.4px;background:#ffffc4"></div>
<div class="t" style="left:155.00px;top:338.52px;font-size:6.4px;color:#333;font-weight:400;transform:scaleX(0.83);transform-origin:0 0;">Scan Properties</div>
<div class="t" style="left:207.40px;top:338.52px;font-size:6.4px;color:#333;font-weight:400;transform:scaleX(0.83);transform-origin:0 0;">Value</div>
<div class="t" style="left:153.20px;top:347.42px;font-size:6.4px;color:#222;font-weight:400;transform:scaleX(0.83);transform-origin:0 0;">Scan Rate (V/s)</div>
<div class="t" style="left:205.60px;top:347.42px;font-size:6.4px;color:#222;font-weight:400;transform:scaleX(0.83);transform-origin:0 0;">0.02</div>
<div class="t" style="left:153.20px;top:354.62px;font-size:6.4px;color:#222;font-weight:400;transform:scaleX(0.83);transform-origin:0 0;color:#a8a8a8">Total Points</div>
<div class="t" style="left:205.60px;top:354.62px;font-size:6.4px;color:#222;font-weight:400;transform:scaleX(0.83);transform-origin:0 0;color:#a8a8a8">2000</div>
<div class="a" style="left:150.2px;top:335.5px;width:94.5px;height:32.2px;border:1px solid #98b4d8"></div>
<div class="a" style="left:651px;top:37px;width:147px;height:376px;background:#6f86dc;border-radius:4px 4px 0 0"></div>
<div class="a" style="left:651px;top:37px;width:147px;height:15px;border-radius:4px 4px 0 0;background:linear-gradient(#9db4ee,#7f9be4 20%,#7994df 60%,#7ea0e6 90%,#3e4f8e)"></div>
<div class="t mono" style="left:655.00px;top:42.91px;font-size:6.62px;color:#d4ddf6;font-weight:bold;transform:scaleX(1.0);transform-origin:0 0;">Data View - 176 Points (All Seg...</div>
<div class="a" style="left:654px;top:52px;width:141px;height:16px;background:#ece9d8;border-bottom:1px solid #202020"></div>
<div class="a" style="left:658.7px;top:54px;width:8px;height:8px;border:1px solid #c0c4d8;border-radius:1px;background:#f0f2fa"></div>
<svg class="a" style="left:658.7px;top:54px" width="8" height="8" viewBox="0 0 8 8"><path d="M1.2 1.6 H6.8 V3.4 L4.8 5.2 V7 H3.2 V5.2 L1.2 3.4 Z" fill="#101820"/><path d="M2.2 2.3 H5.8 V3.1 L4.2 4.6 H3.8 L2.2 3.1 Z" fill="#1a88f0"/></svg>
<div class="a" style="left:674px;top:54px;width:8px;height:8px;border:1px solid #c0c4d8;border-radius:1px;background:#f0f2fa"></div>
<svg class="a" style="left:674px;top:54px" width="8.5" height="8.5" viewBox="0 0 8.5 8.5"><rect x="1.6" y="2.6" width="4.6" height="4.4" fill="#fff" stroke="#3050c0" stroke-width="1"/><path d="M2.6 4.4 L3.9 5.8 L7 1.6" fill="none" stroke="#f04020" stroke-width="1.1"/></svg>
<div class="a" style="left:654px;top:68px;width:141px;height:342px;background:#fff"></div>
<div class="a" style="left:654px;top:68px;width:133.5px;height:10px;background:linear-gradient(#f8f7f0,#ebeadb 80%,#d8d6c6);border-bottom:1px solid #d4d2c2"></div>
<div class="a" style="left:697.9px;top:70px;width:1px;height:6px;background:#c8c6b6"></div>
<div class="a" style="left:697.9px;top:78px;width:1px;height:325px;background:#ecebe2"></div>
<div class="a" style="left:743px;top:70px;width:1px;height:6px;background:#c8c6b6"></div>
<div class="a" style="left:743px;top:78px;width:1px;height:325px;background:#ecebe2"></div>
<div class="t mono" style="left:657.90px;top:71.16px;font-size:5.6px;color:#222;font-weight:400;transform:scaleX(0.9);transform-origin:0 0;">Potential...</div>
<div class="t mono" style="left:702.00px;top:71.16px;font-size:5.6px;color:#222;font-weight:400;transform:scaleX(0.9);transform-origin:0 0;">Current (A)</div>
<div class="t mono" style="left:747.00px;top:71.16px;font-size:5.6px;color:#222;font-weight:400;transform:scaleX(0.9);transform-origin:0 0;">Elapsed T...</div>
<div class="a" style="left:654px;top:83.39px;width:133.5px;height:0.6px;background:#eeede4"></div>
<div class="t mono" style="left:656.30px;top:79.21px;font-size:5.8px;color:#222;font-weight:400;transform:scaleX(0.87);transform-origin:0 0;">–5.731  V</div>
<div class="t mono" style="left:701.00px;top:79.21px;font-size:5.8px;color:#222;font-weight:400;transform:scaleX(0.87);transform-origin:0 0;">–26.02 nA</div>
<div class="t mono" style="left:746.00px;top:79.21px;font-size:5.8px;color:#222;font-weight:400;transform:scaleX(0.87);transform-origin:0 0;">0.05</div>
<div class="a" style="left:654px;top:89.87px;width:133.5px;height:0.6px;background:#eeede4"></div>
<div class="t mono" style="left:656.30px;top:85.70px;font-size:5.8px;color:#222;font-weight:400;transform:scaleX(0.87);transform-origin:0 0;">–6.511  V</div>
<div class="t mono" style="left:701.00px;top:85.70px;font-size:5.8px;color:#222;font-weight:400;transform:scaleX(0.87);transform-origin:0 0;">29.554 nA</div>
<div class="t mono" style="left:746.00px;top:85.70px;font-size:5.8px;color:#222;font-weight:400;transform:scaleX(0.87);transform-origin:0 0;">0.1</div>
<div class="a" style="left:654px;top:96.36px;width:133.5px;height:0.6px;background:#eeede4"></div>
<div class="t mono" style="left:656.30px;top:92.19px;font-size:5.8px;color:#222;font-weight:400;transform:scaleX(0.87);transform-origin:0 0;">–5.731  V</div>
<div class="t mono" style="left:701.00px;top:92.19px;font-size:5.8px;color:#222;font-weight:400;transform:scaleX(0.87);transform-origin:0 0;">–27.928 nA</div>
<div class="t mono" style="left:746.00px;top:92.19px;font-size:5.8px;color:#222;font-weight:400;transform:scaleX(0.87);transform-origin:0 0;">0.15</div>
<div class="a" style="left:654px;top:102.85px;width:133.5px;height:0.6px;background:#eeede4"></div>
<div class="t mono" style="left:656.30px;top:98.68px;font-size:5.8px;color:#222;font-weight:400;transform:scaleX(0.87);transform-origin:0 0;">–6.515  V</div>
<div class="t mono" style="left:701.00px;top:98.68px;font-size:5.8px;color:#222;font-weight:400;transform:scaleX(0.87);transform-origin:0 0;">26.695 nA</div>
<div class="t mono" style="left:746.00px;top:98.68px;font-size:5.8px;color:#222;font-weight:400;transform:scaleX(0.87);transform-origin:0 0;">0.2</div>
<div class="a" style="left:654px;top:109.34px;width:133.5px;height:0.6px;background:#eeede4"></div>
<div class="t mono" style="left:656.30px;top:105.16px;font-size:5.8px;color:#222;font-weight:400;transform:scaleX(0.87);transform-origin:0 0;">–5.732  V</div>
<div class="t mono" style="left:701.00px;top:105.16px;font-size:5.8px;color:#222;font-weight:400;transform:scaleX(0.87);transform-origin:0 0;">–26.143 nA</div>
<div class="t mono" style="left:746.00px;top:105.16px;font-size:5.8px;color:#222;font-weight:400;transform:scaleX(0.87);transform-origin:0 0;">0.25</div>
<div class="a" style="left:654px;top:115.82px;width:133.5px;height:0.6px;background:#eeede4"></div>
<div class="t mono" style="left:656.30px;top:111.65px;font-size:5.8px;color:#222;font-weight:400;transform:scaleX(0.87);transform-origin:0 0;">–6.517  V</div>
<div class="t mono" style="left:701.00px;top:111.65px;font-size:5.8px;color:#222;font-weight:400;transform:scaleX(0.87);transform-origin:0 0;">29.161 nA</div>
<div class="t mono" style="left:746.00px;top:111.65px;font-size:5.8px;color:#222;font-weight:400;transform:scaleX(0.87);transform-origin:0 0;">0.3</div>
<div class="a" style="left:654px;top:122.31px;width:133.5px;height:0.6px;background:#eeede4"></div>
<div class="t mono" style="left:656.30px;top:118.14px;font-size:5.8px;color:#222;font-weight:400;transform:scaleX(0.87);transform-origin:0 0;">–5.733  V</div>
<div class="t mono" style="left:701.00px;top:118.14px;font-size:5.8px;color:#222;font-weight:400;transform:scaleX(0.87);transform-origin:0 0;">–28.916 nA</div>
<div class="t mono" style="left:746.00px;top:118.14px;font-size:5.8px;color:#222;font-weight:400;transform:scaleX(0.87);transform-origin:0 0;">0.35</div>
<div class="a" style="left:654px;top:128.80px;width:133.5px;height:0.6px;background:#eeede4"></div>
<div class="t mono" style="left:656.30px;top:124.62px;font-size:5.8px;color:#222;font-weight:400;transform:scaleX(0.87);transform-origin:0 0;">–6.52  V</div>
<div class="t mono" style="left:701.00px;top:124.62px;font-size:5.8px;color:#222;font-weight:400;transform:scaleX(0.87);transform-origin:0 0;">26.646 nA</div>
<div class="t mono" style="left:746.00px;top:124.62px;font-size:5.8px;color:#222;font-weight:400;transform:scaleX(0.87);transform-origin:0 0;">0.4</div>
<div class="a" style="left:654px;top:135.28px;width:133.5px;height:0.6px;background:#eeede4"></div>
<div class="t mono" style="left:656.30px;top:131.11px;font-size:5.8px;color:#222;font-weight:400;transform:scaleX(0.87);transform-origin:0 0;">–5.734  V</div>
<div class="t mono" style="left:701.00px;top:131.11px;font-size:5.8px;color:#222;font-weight:400;transform:scaleX(0.87);transform-origin:0 0;">–27.382 nA</div>
<div class="t mono" style="left:746.00px;top:131.11px;font-size:5.8px;color:#222;font-weight:400;transform:scaleX(0.87);transform-origin:0 0;">0.45</div>
<div class="a" style="left:654px;top:141.77px;width:133.5px;height:0.6px;background:#eeede4"></div>
<div class="t mono" style="left:656.30px;top:137.60px;font-size:5.8px;color:#222;font-weight:400;transform:scaleX(0.87);transform-origin:0 0;">–6.523  V</div>
<div class="t mono" style="left:701.00px;top:137.60px;font-size:5.8px;color:#222;font-weight:400;transform:scaleX(0.87);transform-origin:0 0;">26.934 nA</div>
<div class="t mono" style="left:746.00px;top:137.60px;font-size:5.8px;color:#222;font-weight:400;transform:scaleX(0.87);transform-origin:0 0;">0.5</div>
<div class="a" style="left:654px;top:148.26px;width:133.5px;height:0.6px;background:#eeede4"></div>
<div class="t mono" style="left:656.30px;top:144.08px;font-size:5.8px;color:#222;font-weight:400;transform:scaleX(0.87);transform-origin:0 0;">–5.735  V</div>
<div class="t mono" style="left:701.00px;top:144.08px;font-size:5.8px;color:#222;font-weight:400;transform:scaleX(0.87);transform-origin:0 0;">–26.192 nA</div>
<div class="t mono" style="left:746.00px;top:144.08px;font-size:5.8px;color:#222;font-weight:400;transform:scaleX(0.87);transform-origin:0 0;">0.55</div>
<div class="a" style="left:654px;top:154.74px;width:133.5px;height:0.6px;background:#eeede4"></div>
<div class="t mono" style="left:656.30px;top:150.57px;font-size:5.8px;color:#222;font-weight:400;transform:scaleX(0.87);transform-origin:0 0;">–6.526  V</div>
<div class="t mono" style="left:701.00px;top:150.57px;font-size:5.8px;color:#222;font-weight:400;transform:scaleX(0.87);transform-origin:0 0;">20.764 nA</div>
<div class="t mono" style="left:746.00px;top:150.57px;font-size:5.8px;color:#222;font-weight:400;transform:scaleX(0.87);transform-origin:0 0;">0.6</div>
<div class="a" style="left:654px;top:161.23px;width:133.5px;height:0.6px;background:#eeede4"></div>
<div class="t mono" style="left:656.30px;top:157.06px;font-size:5.8px;color:#222;font-weight:400;transform:scaleX(0.87);transform-origin:0 0;">–5.735  V</div>
<div class="t mono" style="left:701.00px;top:157.06px;font-size:5.8px;color:#222;font-weight:400;transform:scaleX(0.87);transform-origin:0 0;">–24.34 nA</div>
<div class="t mono" style="left:746.00px;top:157.06px;font-size:5.8px;color:#222;font-weight:400;transform:scaleX(0.87);transform-origin:0 0;">0.65</div>
<div class="a" style="left:654px;top:167.72px;width:133.5px;height:0.6px;background:#eeede4"></div>
<div class="t mono" style="left:656.30px;top:163.55px;font-size:5.8px;color:#222;font-weight:400;transform:scaleX(0.87);transform-origin:0 0;">–6.529  V</div>
<div class="t mono" style="left:701.00px;top:163.55px;font-size:5.8px;color:#222;font-weight:400;transform:scaleX(0.87);transform-origin:0 0;">22.947 nA</div>
<div class="t mono" style="left:746.00px;top:163.55px;font-size:5.8px;color:#222;font-weight:400;transform:scaleX(0.87);transform-origin:0 0;">0.7</div>
<div class="a" style="left:654px;top:174.21px;width:133.5px;height:0.6px;background:#eeede4"></div>
<div class="t mono" style="left:656.30px;top:170.03px;font-size:5.8px;color:#222;font-weight:400;transform:scaleX(0.87);transform-origin:0 0;">–5.735  V</div>
<div class="t mono" style="left:701.00px;top:170.03px;font-size:5.8px;color:#222;font-weight:400;transform:scaleX(0.87);transform-origin:0 0;">–21.837 nA</div>
<div class="t mono" style="left:746.00px;top:170.03px;font-size:5.8px;color:#222;font-weight:400;transform:scaleX(0.87);transform-origin:0 0;">0.75</div>
<div class="a" style="left:654px;top:180.69px;width:133.5px;height:0.6px;background:#eeede4"></div>
<div class="t mono" style="left:656.30px;top:176.52px;font-size:5.8px;color:#222;font-weight:400;transform:scaleX(0.87);transform-origin:0 0;">–6.532  V</div>
<div class="t mono" style="left:701.00px;top:176.52px;font-size:5.8px;color:#222;font-weight:400;transform:scaleX(0.87);transform-origin:0 0;">22.512 nA</div>
<div class="t mono" style="left:746.00px;top:176.52px;font-size:5.8px;color:#222;font-weight:400;transform:scaleX(0.87);transform-origin:0 0;">0.8</div>
<div class="a" style="left:654px;top:187.18px;width:133.5px;height:0.6px;background:#eeede4"></div>
<div class="t mono" style="left:656.30px;top:183.01px;font-size:5.8px;color:#222;font-weight:400;transform:scaleX(0.87);transform-origin:0 0;">–5.736  V</div>
<div class="t mono" style="left:701.00px;top:183.01px;font-size:5.8px;color:#222;font-weight:400;transform:scaleX(0.87);transform-origin:0 0;">–25.1 nA</div>
<div class="t mono" style="left:746.00px;top:183.01px;font-size:5.8px;color:#222;font-weight:400;transform:scaleX(0.87);transform-origin:0 0;">0.85</div>
<div class="a" style="left:654px;top:193.67px;width:133.5px;height:0.6px;background:#eeede4"></div>
<div class="t mono" style="left:656.30px;top:189.49px;font-size:5.8px;color:#222;font-weight:400;transform:scaleX(0.87);transform-origin:0 0;">–6.536  V</div>
<div class="t mono" style="left:701.00px;top:189.49px;font-size:5.8px;color:#222;font-weight:400;transform:scaleX(0.87);transform-origin:0 0;">18.819 nA</div>
<div class="t mono" style="left:746.00px;top:189.49px;font-size:5.8px;color:#222;font-weight:400;transform:scaleX(0.87);transform-origin:0 0;">0.9</div>
<div class="a" style="left:654px;top:200.15px;width:133.5px;height:0.6px;background:#eeede4"></div>
<div class="t mono" style="left:656.30px;top:195.98px;font-size:5.8px;color:#222;font-weight:400;transform:scaleX(0.87);transform-origin:0 0;">–5.737  V</div>
<div class="t mono" style="left:701.00px;top:195.98px;font-size:5.8px;color:#222;font-weight:400;transform:scaleX(0.87);transform-origin:0 0;">–21.536 nA</div>
<div class="t mono" style="left:746.00px;top:195.98px;font-size:5.8px;color:#222;font-weight:400;transform:scaleX(0.87);transform-origin:0 0;">0.95</div>
<div class="a" style="left:654px;top:206.64px;width:133.5px;height:0.6px;background:#eeede4"></div>
<div class="t mono" style="left:656.30px;top:202.47px;font-size:5.8px;color:#222;font-weight:400;transform:scaleX(0.87);transform-origin:0 0;">–6.539  V</div>
<div class="t mono" style="left:701.00px;top:202.47px;font-size:5.8px;color:#222;font-weight:400;transform:scaleX(0.87);transform-origin:0 0;">17.911 nA</div>
<div class="t mono" style="left:746.00px;top:202.47px;font-size:5.8px;color:#222;font-weight:400;transform:scaleX(0.87);transform-origin:0 0;">1</div>
<div class="a" style="left:654px;top:213.13px;width:133.5px;height:0.6px;background:#eeede4"></div>
<div class="t mono" style="left:656.30px;top:208.95px;font-size:5.8px;color:#222;font-weight:400;transform:scaleX(0.87);transform-origin:0 0;">–5.737  V</div>
<div class="t mono" style="left:701.00px;top:208.95px;font-size:5.8px;color:#222;font-weight:400;transform:scaleX(0.87);transform-origin:0 0;">–19.672 nA</div>
<div class="t mono" style="left:746.00px;top:208.95px;font-size:5.8px;color:#222;font-weight:400;transform:scaleX(0.87);transform-origin:0 0;">1.05</div>
<div class="a" style="left:654px;top:219.61px;width:133.5px;height:0.6px;background:#eeede4"></div>
<div class="t mono" style="left:656.30px;top:215.44px;font-size:5.8px;color:#222;font-weight:400;transform:scaleX(0.87);transform-origin:0 0;">–6.542  V</div>
<div class="t mono" style="left:701.00px;top:215.44px;font-size:5.8px;color:#222;font-weight:400;transform:scaleX(0.87);transform-origin:0 0;">20.04 nA</div>
<div class="t mono" style="left:746.00px;top:215.44px;font-size:5.8px;color:#222;font-weight:400;transform:scaleX(0.87);transform-origin:0 0;">1.1</div>
<div class="a" style="left:654px;top:226.10px;width:133.5px;height:0.6px;background:#eeede4"></div>
<div class="t mono" style="left:656.30px;top:221.93px;font-size:5.8px;color:#222;font-weight:400;transform:scaleX(0.87);transform-origin:0 0;">–5.738  V</div>
<div class="t mono" style="left:701.00px;top:221.93px;font-size:5.8px;color:#222;font-weight:400;transform:scaleX(0.87);transform-origin:0 0;">–15.304 nA</div>
<div class="t mono" style="left:746.00px;top:221.93px;font-size:5.8px;color:#222;font-weight:400;transform:scaleX(0.87);transform-origin:0 0;">1.15</div>
<div class="a" style="left:654px;top:232.59px;width:133.5px;height:0.6px;background:#eeede4"></div>
<div class="t mono" style="left:656.30px;top:228.42px;font-size:5.8px;color:#222;font-weight:400;transform:scaleX(0.87);transform-origin:0 0;">–6.546  V</div>
<div class="t mono" style="left:701.00px;top:228.42px;font-size:5.8px;color:#222;font-weight:400;transform:scaleX(0.87);transform-origin:0 0;">16.562 nA</div>
<div class="t mono" style="left:746.00px;top:228.42px;font-size:5.8px;color:#222;font-weight:400;transform:scaleX(0.87);transform-origin:0 0;">1.2</div>
<div class="a" style="left:654px;top:239.07px;width:133.5px;height:0.6px;background:#eeede4"></div>
<div class="t mono" style="left:656.30px;top:234.90px;font-size:5.8px;color:#222;font-weight:400;transform:scaleX(0.87);transform-origin:0 0;">–5.738  V</div>
<div class="t mono" style="left:701.00px;top:234.90px;font-size:5.8px;color:#222;font-weight:400;transform:scaleX(0.87);transform-origin:0 0;">–16.187 nA</div>
<div class="t mono" style="left:746.00px;top:234.90px;font-size:5.8px;color:#222;font-weight:400;transform:scaleX(0.87);transform-origin:0 0;">1.25</div>
<div class="a" style="left:654px;top:245.56px;width:133.5px;height:0.6px;background:#eeede4"></div>
<div class="t mono" style="left:656.30px;top:241.39px;font-size:5.8px;color:#222;font-weight:400;transform:scaleX(0.87);transform-origin:0 0;">–6.548  V</div>
<div class="t mono" style="left:701.00px;top:241.39px;font-size:5.8px;color:#222;font-weight:400;transform:scaleX(0.87);transform-origin:0 0;">14.464 nA</div>
<div class="t mono" style="left:746.00px;top:241.39px;font-size:5.8px;color:#222;font-weight:400;transform:scaleX(0.87);transform-origin:0 0;">1.3</div>
<div class="a" style="left:654px;top:252.05px;width:133.5px;height:0.6px;background:#eeede4"></div>
<div class="t mono" style="left:656.30px;top:247.88px;font-size:5.8px;color:#222;font-weight:400;transform:scaleX(0.87);transform-origin:0 0;">–5.74  V</div>
<div class="t mono" style="left:701.00px;top:247.88px;font-size:5.8px;color:#222;font-weight:400;transform:scaleX(0.87);transform-origin:0 0;">–18.488 nA</div>
<div class="t mono" style="left:746.00px;top:247.88px;font-size:5.8px;color:#222;font-weight:400;transform:scaleX(0.87);transform-origin:0 0;">1.35</div>
<div class="a" style="left:654px;top:258.54px;width:133.5px;height:0.6px;background:#eeede4"></div>
<div class="t mono" style="left:656.30px;top:254.36px;font-size:5.8px;color:#222;font-weight:400;transform:scaleX(0.87);transform-origin:0 0;">–6.55  V</div>
<div class="t mono" style="left:701.00px;top:254.36px;font-size:5.8px;color:#222;font-weight:400;transform:scaleX(0.87);transform-origin:0 0;">13.636 nA</div>
<div class="t mono" style="left:746.00px;top:254.36px;font-size:5.8px;color:#222;font-weight:400;transform:scaleX(0.87);transform-origin:0 0;">1.4</div>
<div class="a" style="left:654px;top:259.04px;width:133.5px;height:6.49px;background:#ffff00"></div>
<div class="a" style="left:654px;top:265.02px;width:133.5px;height:0.6px;background:#eeede4"></div>
<div class="t mono" style="left:656.30px;top:260.85px;font-size:5.8px;color:#222;font-weight:400;transform:scaleX(0.87);transform-origin:0 0;">–5.741  V</div>
<div class="t mono" style="left:701.00px;top:260.85px;font-size:5.8px;color:#222;font-weight:400;transform:scaleX(0.87);transform-origin:0 0;">–14.087 nA</div>
<div class="t mono" style="left:746.00px;top:260.85px;font-size:5.8px;color:#222;font-weight:400;transform:scaleX(0.87);transform-origin:0 0;">1.45</div>
<div class="a" style="left:654px;top:271.51px;width:133.5px;height:0.6px;background:#eeede4"></div>
<div class="t mono" style="left:656.30px;top:267.34px;font-size:5.8px;color:#222;font-weight:400;transform:scaleX(0.87);transform-origin:0 0;">–6.554  V</div>
<div class="t mono" style="left:701.00px;top:267.34px;font-size:5.8px;color:#222;font-weight:400;transform:scaleX(0.87);transform-origin:0 0;">13.26 nA</div>
<div class="t mono" style="left:746.00px;top:267.34px;font-size:5.8px;color:#222;font-weight:400;transform:scaleX(0.87);transform-origin:0 0;">1.5</div>
<div class="a" style="left:654px;top:278.00px;width:133.5px;height:0.6px;background:#eeede4"></div>
<div class="t mono" style="left:656.30px;top:273.82px;font-size:5.8px;color:#222;font-weight:400;transform:scaleX(0.87);transform-origin:0 0;">–5.742  V</div>
<div class="t mono" style="left:701.00px;top:273.82px;font-size:5.8px;color:#222;font-weight:400;transform:scaleX(0.87);transform-origin:0 0;">–12.931 nA</div>
<div class="t mono" style="left:746.00px;top:273.82px;font-size:5.8px;color:#222;font-weight:400;transform:scaleX(0.87);transform-origin:0 0;">1.55</div>
<div class="a" style="left:654px;top:278.50px;width:133.5px;height:6.49px;background:#ffff00"></div>
<div class="a" style="left:654px;top:284.48px;width:133.5px;height:0.6px;background:#eeede4"></div>
<div class="t mono" style="left:656.30px;top:280.31px;font-size:5.8px;color:#222;font-weight:400;transform:scaleX(0.87);transform-origin:0 0;">–6.557  V</div>
<div class="t mono" style="left:701.00px;top:280.31px;font-size:5.8px;color:#222;font-weight:400;transform:scaleX(0.87);transform-origin:0 0;">12.224 nA</div>
<div class="t mono" style="left:746.00px;top:280.31px;font-size:5.8px;color:#222;font-weight:400;transform:scaleX(0.87);transform-origin:0 0;">1.6</div>
<div class="a" style="left:654px;top:290.97px;width:133.5px;height:0.6px;background:#eeede4"></div>
<div class="t mono" style="left:656.30px;top:286.80px;font-size:5.8px;color:#222;font-weight:400;transform:scaleX(0.87);transform-origin:0 0;">–5.743  V</div>
<div class="t mono" style="left:701.00px;top:286.80px;font-size:5.8px;color:#222;font-weight:400;transform:scaleX(0.87);transform-origin:0 0;">–11.923 nA</div>
<div class="t mono" style="left:746.00px;top:286.80px;font-size:5.8px;color:#222;font-weight:400;transform:scaleX(0.87);transform-origin:0 0;">1.65</div>
<div class="a" style="left:654px;top:297.46px;width:133.5px;height:0.6px;background:#eeede4"></div>
<div class="t mono" style="left:656.30px;top:293.29px;font-size:5.8px;color:#222;font-weight:400;transform:scaleX(0.87);transform-origin:0 0;">–6.56  V</div>
<div class="t mono" style="left:701.00px;top:293.29px;font-size:5.8px;color:#222;font-weight:400;transform:scaleX(0.87);transform-origin:0 0;">10.312 nA</div>
<div class="t mono" style="left:746.00px;top:293.29px;font-size:5.8px;color:#222;font-weight:400;transform:scaleX(0.87);transform-origin:0 0;">1.7</div>
<div class="a" style="left:654px;top:303.94px;width:133.5px;height:0.6px;background:#eeede4"></div>
<div class="t mono" style="left:656.30px;top:299.77px;font-size:5.8px;color:#222;font-weight:400;transform:scaleX(0.87);transform-origin:0 0;">–5.743  V</div>
<div class="t mono" style="left:701.00px;top:299.77px;font-size:5.8px;color:#222;font-weight:400;transform:scaleX(0.87);transform-origin:0 0;">–11.933 nA</div>
<div class="t mono" style="left:746.00px;top:299.77px;font-size:5.8px;color:#222;font-weight:400;transform:scaleX(0.87);transform-origin:0 0;">1.75</div>
<div class="a" style="left:654px;top:304.45px;width:133.5px;height:6.49px;background:#ffff00"></div>
<div class="a" style="left:654px;top:310.43px;width:133.5px;height:0.6px;background:#eeede4"></div>
<div class="t mono" style="left:656.30px;top:306.26px;font-size:5.8px;color:#222;font-weight:400;transform:scaleX(0.87);transform-origin:0 0;">–6.564  V</div>
<div class="t mono" style="left:701.00px;top:306.26px;font-size:5.8px;color:#222;font-weight:400;transform:scaleX(0.87);transform-origin:0 0;">11.175 nA</div>
<div class="t mono" style="left:746.00px;top:306.26px;font-size:5.8px;color:#222;font-weight:400;transform:scaleX(0.87);transform-origin:0 0;">1.8</div>
<div class="a" style="left:654px;top:316.92px;width:133.5px;height:0.6px;background:#eeede4"></div>
<div class="t mono" style="left:656.30px;top:312.75px;font-size:5.8px;color:#222;font-weight:400;transform:scaleX(0.87);transform-origin:0 0;">–5.744  V</div>
<div class="t mono" style="left:701.00px;top:312.75px;font-size:5.8px;color:#222;font-weight:400;transform:scaleX(0.87);transform-origin:0 0;">–12.152 nA</div>
<div class="t mono" style="left:746.00px;top:312.75px;font-size:5.8px;color:#222;font-weight:400;transform:scaleX(0.87);transform-origin:0 0;">1.85</div>
<div class="a" style="left:654px;top:323.41px;width:133.5px;height:0.6px;background:#eeede4"></div>
<div class="t mono" style="left:656.30px;top:319.23px;font-size:5.8px;color:#222;font-weight:400;transform:scaleX(0.87);transform-origin:0 0;">–6.568  V</div>
<div class="t mono" style="left:701.00px;top:319.23px;font-size:5.8px;color:#222;font-weight:400;transform:scaleX(0.87);transform-origin:0 0;">11.032 nA</div>
<div class="t mono" style="left:746.00px;top:319.23px;font-size:5.8px;color:#222;font-weight:400;transform:scaleX(0.87);transform-origin:0 0;">1.9</div>
<div class="a" style="left:654px;top:329.89px;width:133.5px;height:0.6px;background:#eeede4"></div>
<div class="t mono" style="left:656.30px;top:325.72px;font-size:5.8px;color:#222;font-weight:400;transform:scaleX(0.87);transform-origin:0 0;">–5.745  V</div>
<div class="t mono" style="left:701.00px;top:325.72px;font-size:5.8px;color:#222;font-weight:400;transform:scaleX(0.87);transform-origin:0 0;">–10.848 nA</div>
<div class="t mono" style="left:746.00px;top:325.72px;font-size:5.8px;color:#222;font-weight:400;transform:scaleX(0.87);transform-origin:0 0;">1.95</div>
<div class="a" style="left:654px;top:336.38px;width:133.5px;height:0.6px;background:#eeede4"></div>
<div class="t mono" style="left:656.30px;top:332.21px;font-size:5.8px;color:#222;font-weight:400;transform:scaleX(0.87);transform-origin:0 0;">–6.571  V</div>
<div class="t mono" style="left:701.00px;top:332.21px;font-size:5.8px;color:#222;font-weight:400;transform:scaleX(0.87);transform-origin:0 0;">11.1 nA</div>
<div class="t mono" style="left:746.00px;top:332.21px;font-size:5.8px;color:#222;font-weight:400;transform:scaleX(0.87);transform-origin:0 0;">2</div>
<div class="a" style="left:654px;top:342.87px;width:133.5px;height:0.6px;background:#eeede4"></div>
<div class="t mono" style="left:656.30px;top:338.69px;font-size:5.8px;color:#222;font-weight:400;transform:scaleX(0.87);transform-origin:0 0;">–5.746  V</div>
<div class="t mono" style="left:701.00px;top:338.69px;font-size:5.8px;color:#222;font-weight:400;transform:scaleX(0.87);transform-origin:0 0;">–11.546 nA</div>
<div class="t mono" style="left:746.00px;top:338.69px;font-size:5.8px;color:#222;font-weight:400;transform:scaleX(0.87);transform-origin:0 0;">2.05</div>
<div class="a" style="left:654px;top:349.35px;width:133.5px;height:0.6px;background:#eeede4"></div>
<div class="t mono" style="left:656.30px;top:345.18px;font-size:5.8px;color:#222;font-weight:400;transform:scaleX(0.87);transform-origin:0 0;">–6.574  V</div>
<div class="t mono" style="left:701.00px;top:345.18px;font-size:5.8px;color:#222;font-weight:400;transform:scaleX(0.87);transform-origin:0 0;">10.864 nA</div>
<div class="t mono" style="left:746.00px;top:345.18px;font-size:5.8px;color:#222;font-weight:400;transform:scaleX(0.87);transform-origin:0 0;">2.1</div>
<div class="a" style="left:654px;top:355.84px;width:133.5px;height:0.6px;background:#eeede4"></div>
<div class="t mono" style="left:656.30px;top:351.67px;font-size:5.8px;color:#222;font-weight:400;transform:scaleX(0.87);transform-origin:0 0;">–5.746  V</div>
<div class="t mono" style="left:701.00px;top:351.67px;font-size:5.8px;color:#222;font-weight:400;transform:scaleX(0.87);transform-origin:0 0;">–12.322 nA</div>
<div class="t mono" style="left:746.00px;top:351.67px;font-size:5.8px;color:#222;font-weight:400;transform:scaleX(0.87);transform-origin:0 0;">2.15</div>
<div class="a" style="left:654px;top:362.33px;width:133.5px;height:0.6px;background:#eeede4"></div>
<div class="t mono" style="left:656.30px;top:358.16px;font-size:5.8px;color:#222;font-weight:400;transform:scaleX(0.87);transform-origin:0 0;">–6.577  V</div>
<div class="t mono" style="left:701.00px;top:358.16px;font-size:5.8px;color:#222;font-weight:400;transform:scaleX(0.87);transform-origin:0 0;">10.688 nA</div>
<div class="t mono" style="left:746.00px;top:358.16px;font-size:5.8px;color:#222;font-weight:400;transform:scaleX(0.87);transform-origin:0 0;">2.2</div>
<div class="a" style="left:654px;top:368.81px;width:133.5px;height:0.6px;background:#eeede4"></div>
<div class="t mono" style="left:656.30px;top:364.64px;font-size:5.8px;color:#222;font-weight:400;transform:scaleX(0.87);transform-origin:0 0;">–5.747  V</div>
<div class="t mono" style="left:701.00px;top:364.64px;font-size:5.8px;color:#222;font-weight:400;transform:scaleX(0.87);transform-origin:0 0;">–12.591 nA</div>
<div class="t mono" style="left:746.00px;top:364.64px;font-size:5.8px;color:#222;font-weight:400;transform:scaleX(0.87);transform-origin:0 0;">2.25</div>
<div class="a" style="left:654px;top:375.30px;width:133.5px;height:0.6px;background:#eeede4"></div>
<div class="t mono" style="left:656.30px;top:371.13px;font-size:5.8px;color:#222;font-weight:400;transform:scaleX(0.87);transform-origin:0 0;">–6.58  V</div>
<div class="t mono" style="left:701.00px;top:371.13px;font-size:5.8px;color:#222;font-weight:400;transform:scaleX(0.87);transform-origin:0 0;">10.94 nA</div>
<div class="t mono" style="left:746.00px;top:371.13px;font-size:5.8px;color:#222;font-weight:400;transform:scaleX(0.87);transform-origin:0 0;">2.3</div>
<div class="a" style="left:654px;top:381.79px;width:133.5px;height:0.6px;background:#eeede4"></div>
<div class="t mono" style="left:656.30px;top:377.62px;font-size:5.8px;color:#222;font-weight:400;transform:scaleX(0.87);transform-origin:0 0;">–5.747  V</div>
<div class="t mono" style="left:701.00px;top:377.62px;font-size:5.8px;color:#222;font-weight:400;transform:scaleX(0.87);transform-origin:0 0;">–11.672 nA</div>
<div class="t mono" style="left:746.00px;top:377.62px;font-size:5.8px;color:#222;font-weight:400;transform:scaleX(0.87);transform-origin:0 0;">2.35</div>
<div class="a" style="left:654px;top:388.28px;width:133.5px;height:0.6px;background:#eeede4"></div>
<div class="t mono" style="left:656.30px;top:384.10px;font-size:5.8px;color:#222;font-weight:400;transform:scaleX(0.87);transform-origin:0 0;">–6.584  V</div>
<div class="t mono" style="left:701.00px;top:384.10px;font-size:5.8px;color:#222;font-weight:400;transform:scaleX(0.87);transform-origin:0 0;">10.748 nA</div>
<div class="t mono" style="left:746.00px;top:384.10px;font-size:5.8px;color:#222;font-weight:400;transform:scaleX(0.87);transform-origin:0 0;">2.4</div>
<div class="a" style="left:654px;top:394.76px;width:133.5px;height:0.6px;background:#eeede4"></div>
<div class="t mono" style="left:656.30px;top:390.59px;font-size:5.8px;color:#222;font-weight:400;transform:scaleX(0.87);transform-origin:0 0;">–5.748  V</div>
<div class="t mono" style="left:701.00px;top:390.59px;font-size:5.8px;color:#222;font-weight:400;transform:scaleX(0.87);transform-origin:0 0;">–12.356 nA</div>
<div class="t mono" style="left:746.00px;top:390.59px;font-size:5.8px;color:#222;font-weight:400;transform:scaleX(0.87);transform-origin:0 0;">2.45</div>
<div class="a" style="left:654px;top:401.25px;width:133.5px;height:0.6px;background:#eeede4"></div>
<div class="t mono" style="left:656.30px;top:397.08px;font-size:5.8px;color:#222;font-weight:400;transform:scaleX(0.87);transform-origin:0 0;">–6.586  V</div>
<div class="t mono" style="left:701.00px;top:397.08px;font-size:5.8px;color:#222;font-weight:400;transform:scaleX(0.87);transform-origin:0 0;">11.415 nA</div>
<div class="t mono" style="left:746.00px;top:397.08px;font-size:5.8px;color:#222;font-weight:400;transform:scaleX(0.87);transform-origin:0 0;">2.5</div>
<div class="a" style="left:653.6px;top:68px;width:0.7px;height:342px;background:#404848"></div>
<div class="a" style="left:787.5px;top:68px;width:7.5px;height:335px;background:#f6f5ee"></div>
<div class="a" style="left:787.5px;top:68px;width:7.5px;height:7px;background:linear-gradient(90deg,#c4d4fc,#b8ccfa);border-radius:1px"></div>
<div class="a" style="left:789.5px;top:70.3px;width:3px;height:3px;border-left:1.1px solid #4d6185;border-top:1.1px solid #4d6185;transform:rotate(45deg)"></div>
<div class="a" style="left:787.5px;top:75.5px;width:7.5px;height:90.5px;background:linear-gradient(90deg,#c8d8fc,#bccefa);border-radius:1px;border-bottom:1px solid #a8bce8"></div>
<div class="a" style="left:787.5px;top:395.5px;width:7.5px;height:7px;background:linear-gradient(90deg,#c4d4fc,#b8ccfa);border-radius:1px"></div>
<div class="a" style="left:789.5px;top:396.7px;width:3px;height:3px;border-right:1.1px solid #4d6185;border-bottom:1.1px solid #4d6185;transform:rotate(45deg)"></div>
<div class="a" style="left:654px;top:403px;width:141px;height:7px;background:#f6f5ee"></div>
<div class="a" style="left:654px;top:403px;width:7px;height:7px;background:linear-gradient(#c4d4fc,#b8ccfa);border-radius:1px"></div>
<div class="a" style="left:656.6px;top:405px;width:3px;height:3px;border-left:1.1px solid #4d6185;border-bottom:1.1px solid #4d6185;transform:rotate(45deg)"></div>
<div class="a" style="left:662px;top:403px;width:35.5px;height:7px;background:linear-gradient(#c8d8fc,#bccefa);border-radius:1px"></div>
<div class="a" style="left:779.5px;top:403px;width:7.5px;height:7px;background:linear-gradient(#c4d4fc,#b8ccfa);border-radius:1px"></div>
<div class="a" style="left:781px;top:405px;width:3px;height:3px;border-right:1.1px solid #4d6185;border-top:1.1px solid #4d6185;transform:rotate(45deg)"></div>
<div class="a" style="left:787.5px;top:403px;width:7.5px;height:7px;background:#ece9d8"></div>
<div class="a" style="left:793.0px;top:408.5px;width:1px;height:1px;background:#c8c6b4"></div>
<div class="a" style="left:793.0px;top:406.5px;width:1px;height:1px;background:#c8c6b4"></div>
<div class="a" style="left:791.0px;top:408.5px;width:1px;height:1px;background:#c8c6b4"></div>
<div class="a" style="left:793.0px;top:404.5px;width:1px;height:1px;background:#c8c6b4"></div>
<div class="a" style="left:791.0px;top:406.5px;width:1px;height:1px;background:#c8c6b4"></div>
<div class="a" style="left:789.0px;top:408.5px;width:1px;height:1px;background:#c8c6b4"></div>
<div class="a" style="left:654px;top:410px;width:141px;height:0.8px;background:#303030"></div>
<div class="a" style="left:2.5px;top:24.3px;width:8px;height:8px"><div class="a" style="left:0.5px;top:0;width:6px;height:8px;background:#fafcff;border:1px solid #98a8c0;border-radius:0 2px 0 0"></div></div>
<div class="a" style="left:13px;top:24.3px;width:8px;height:8px"><div class="a" style="left:0;top:3px;width:8px;height:5px;background:linear-gradient(#ffe070,#e0b020);border:0.5px solid #b08010"></div><div class="a" style="left:3px;top:0;width:5px;height:4px;border-right:2px solid #20a040;border-top:2px solid #20a040;border-radius:0 3px 0 0"></div></div>
<div class="a" style="left:25px;top:24.3px;width:8px;height:8px"><div class="a" style="left:0;top:0;width:7.5px;height:8px;background:#2438b8;border-radius:1px"></div><div class="a" style="left:1.5px;top:0.5px;width:4.5px;height:3px;background:#dfe4f0"></div><div class="a" style="left:2px;top:5px;width:3.5px;height:3px;background:#7080d0"></div></div>
<div class="a" style="left:36px;top:24.3px;width:8px;height:8px"><div class="a" style="left:2px;top:0;width:4px;height:3px;background:#90c8f0;border:0.5px solid #5080c0"></div><div class="a" style="left:0;top:3px;width:8px;height:4px;background:linear-gradient(#d8dce4,#9098a8);border-radius:1px"></div><div class="a" style="left:1.5px;top:6.5px;width:5px;height:1.5px;background:#e8e8f0"></div></div>
<div class="a" style="left:48px;top:24.3px;width:8px;height:8px"><svg class="a" style="left:0px;top:0px" width="8" height="8" viewBox="0 0 8 8"><path d="M1.2 1.2 L6.8 6.8 M6.8 1.2 L1.2 6.8" stroke="#c01818" stroke-width="1.7" stroke-linecap="round"/></svg></div>
<div class="a" style="left:59px;top:24.3px;width:8px;height:8px"><div class="a" style="left:0.5px;top:2.5px;width:7.5px;height:5.5px;background:#fff;border:1px solid #4060d0"></div><div class="a" style="left:2px;top:5px;width:4px;height:1px;background:#d04040"></div><div class="a" style="left:0;top:0;width:3px;height:3px;background:#e8d800;transform:rotate(45deg)"></div></div>
<div class="a" style="left:70px;top:23px;width:11px;height:11px;border:1px solid #a8b8d0;background:#f8f8f4;border-radius:1px"></div>
<div class="a" style="left:82px;top:23px;width:11px;height:11px;border:1px solid #a8b8d0;background:#f8f8f4;border-radius:1px"></div>
<div class="a" style="left:71.5px;top:24.3px;width:8px;height:8px"><div class="a" style="left:0.5px;top:1px;width:7px;height:7px;background:#5060a0;border:1px solid #202840"></div><div class="a" style="left:3px;top:3px;width:4px;height:2px;border-left:1.2px solid #e02020;border-bottom:1.2px solid #e02020;transform:rotate(-50deg)"></div><div class="a" style="left:0;top:0;width:2.5px;height:2.5px;background:#e8d800;transform:rotate(45deg)"></div></div>
<div class="a" style="left:83.5px;top:24.3px;width:8px;height:8px"><div class="a" style="left:1px;top:1px;width:7px;height:7px;background:#3038c0;border:1px solid #101860"></div><div class="a" style="left:0;top:0;width:3px;height:3px;background:#e8d800;transform:rotate(45deg)"></div></div>
<div class="a" style="left:93px;top:24.3px;width:8px;height:8px"><div class="a" style="left:0.5px;top:1.5px;width:7.5px;height:6px;background:linear-gradient(#40b060 30%,#fff 30%,#fff 60%,#e04040 60%);border:1px solid #404040"></div><div class="a" style="left:0;top:0;width:2.5px;height:2.5px;background:#e8d800;transform:rotate(45deg)"></div></div>
<div class="a" style="left:105px;top:24.3px;width:8px;height:8px"><div class="a" style="left:0.5px;top:2.5px;width:7px;height:5px;border:1.2px solid #3050d0;border-radius:50%"></div><div class="a" style="left:4px;top:3px;width:4px;height:5px;border-right:1.2px solid #e03030;border-bottom:1.2px solid #e03030;border-radius:0 0 3px 0"></div><div class="a" style="left:0;top:0;width:2.5px;height:2.5px;background:#e8d800;transform:rotate(45deg)"></div></div>
<div class="a" style="left:116px;top:24.3px;width:8px;height:8px"><div class="a" style="left:0;top:0;width:8px;height:8px;background:repeating-linear-gradient(#1878c8 0,#1878c8 1px,#58d0e8 1px,#58d0e8 2.5px)"></div></div>
<div class="a" style="left:129px;top:24.3px;width:8px;height:8px"><div class="a" style="left:0;top:1px;width:7px;height:6px;border-top:2px solid #b0b0b0;border-right:2px solid #b0b0b0;border-radius:0 4px 0 0;transform:skewX(-20deg)"></div></div>
<div class="a" style="left:141px;top:24.3px;width:8px;height:8px"><div class="a" style="left:0;top:1px;width:7px;height:6px;border-top:2px solid #b8b8b8;border-right:2px solid #b8b8b8;border-radius:0 4px 0 0;transform:skewX(-20deg)"></div></div>
<div class="a" style="left:151px;top:24.3px;width:8px;height:8px"><div class="a" style="left:0;top:0;width:8.5px;height:8px;background:#f8f8ff;border:1px solid #3050b8;border-top-width:2px"></div><div class="a" style="left:1.6px;top:3px;width:1.5px;height:1.5px;background:#e03030"></div><div class="a" style="left:3.6px;top:3px;width:1.5px;height:1.5px;background:#3060e0"></div><div class="a" style="left:5.6px;top:3px;width:1.5px;height:1.5px;background:#30b040"></div><div class="a" style="left:1.6px;top:5.2px;width:1.5px;height:1.5px;background:#3060e0"></div><div class="a" style="left:3.6px;top:5.2px;width:1.5px;height:1.5px;background:#e03030"></div><div class="a" style="left:5.6px;top:5.2px;width:1.5px;height:1.5px;background:#e0a020"></div></div>
<div class="a" style="left:162px;top:24.3px;width:8px;height:8px"><div class="a" style="left:0;top:-0.5px;width:9px;height:9px;border-radius:50%;background:radial-gradient(circle at 40% 35%,#80f080,#18a018 60%,#087008)"></div><div class="a" style="left:3.5px;top:2px;width:0;height:0;border-top:2.3px solid transparent;border-bottom:2.3px solid transparent;border-left:3.2px solid #fff"></div></div>
<div class="a" style="left:174px;top:24.3px;width:8px;height:8px"><div class="a" style="left:0;top:-0.5px;width:9px;height:9px;border-radius:50%;background:radial-gradient(circle at 40% 35%,#c8c8c8,#888 60%,#606060)"></div><svg class="a" style="left:0px;top:-0.5px" width="9" height="9" viewBox="0 0 9 9"><path d="M2.8 2.8 L6.2 6.2 M6.2 2.8 L2.8 6.2" stroke="#e8e8e8" stroke-width="1.3" stroke-linecap="round"/></svg></div>
<div class="a" style="left:185px;top:24.3px;width:8px;height:8px"><div class="a" style="left:0;top:-0.5px;width:9px;height:9px;border-radius:50%;background:radial-gradient(circle at 40% 35%,#e8e8e8,#b0b0b0 60%,#909090)"></div><div class="a" style="left:3px;top:2.5px;width:3px;height:4px;border-left:1px solid #f8f8f8;border-right:1px solid #f8f8f8"></div></div>
<div class="a" style="left:0;top:35px;width:800px;height:1px;background:#b8b4a0"></div>
<div class="a" style="left:765.6px;top:1.3px;width:10.3px;height:10.3px;border-radius:2px;border:0.8px solid #fff;background:linear-gradient(135deg,#7ab0ff,#2860e8 45%,#1848d0)"><div class="a" style="left:2.3px;top:5.6px;width:3.6px;height:1.6px;background:#fff"></div></div>
<div class="a" style="left:777.2px;top:1.3px;width:10.3px;height:10.3px;border-radius:2px;border:0.8px solid #fff;background:linear-gradient(135deg,#7ab0ff,#2860e8 45%,#1848d0)"><div class="a" style="left:3.4px;top:1.4px;width:4.2px;height:3.6px;border:1px solid #fff;border-top-width:1.4px"></div><div class="a" style="left:1.6px;top:3.6px;width:4.2px;height:3.8px;border:1px solid #fff;border-top-width:1.4px;background:#3068e8"></div></div>
<div class="a" style="left:788.7px;top:1.3px;width:10.3px;height:10.3px;border-radius:2px;border:0.8px solid #fff;background:linear-gradient(135deg,#f0a080,#e05828 45%,#c83810)"><svg class="a" style="left:0px;top:0px" width="8.7" height="8.7" viewBox="0 0 8.7 8.7"><path d="M2.2 2.2 L6.499999999999999 6.499999999999999 M6.499999999999999 2.2 L2.2 6.499999999999999" stroke="#fff" stroke-width="1.5" stroke-linecap="round"/></svg></div>
<div class="a" style="left:1.2px;top:2.0px;width:7.70px;height:7.70px;background:#0a12c0;border-radius:1.2px;border:0.6px solid transparent"></div>
<div class="a" style="left:2.50px;top:3.20px;width:1.70px;height:5.60px;background:#fff;transform:skewX(22deg);border-radius:0.8px"></div>
<div class="a" style="left:5.80px;top:3.70px;width:2.00px;height:2.00px;background:#f0f4ff;border-radius:50%"></div>
<div class="a" style="left:0;top:421px;width:800px;height:12.7px;background:#ece9d8"></div>
<div class="a" style="left:111px;top:421.5px;width:47px;height:12px;background:#f7f6f2"></div>
<div class="a" style="left:109.5px;top:421.5px;width:1px;height:12px;background:#cac6b2"></div><div class="a" style="left:110.5px;top:421.5px;width:1px;height:12px;background:#fbfaf4"></div>
<div class="a" style="left:158.5px;top:421.5px;width:1px;height:12px;background:#cac6b2"></div><div class="a" style="left:159.5px;top:421.5px;width:1px;height:12px;background:#fbfaf4"></div>
<div class="a" style="left:213px;top:421.5px;width:1px;height:12px;background:#cac6b2"></div><div class="a" style="left:214px;top:421.5px;width:1px;height:12px;background:#fbfaf4"></div>
<div class="a" style="left:266px;top:421.5px;width:1px;height:12px;background:#cac6b2"></div><div class="a" style="left:267px;top:421.5px;width:1px;height:12px;background:#fbfaf4"></div>
<div class="a" style="left:289px;top:421.5px;width:1px;height:12px;background:#cac6b2"></div><div class="a" style="left:290px;top:421.5px;width:1px;height:12px;background:#fbfaf4"></div>
<div class="a" style="left:318px;top:421.5px;width:1px;height:12px;background:#cac6b2"></div><div class="a" style="left:319px;top:421.5px;width:1px;height:12px;background:#fbfaf4"></div>
<div class="a" style="left:417.5px;top:421.5px;width:1px;height:12px;background:#cac6b2"></div><div class="a" style="left:418.5px;top:421.5px;width:1px;height:12px;background:#fbfaf4"></div>
<div class="a" style="left:497.5px;top:421.5px;width:1px;height:12px;background:#cac6b2"></div><div class="a" style="left:498.5px;top:421.5px;width:1px;height:12px;background:#fbfaf4"></div>
<div class="t" style="left:1.20px;top:425.12px;font-size:6.4px;color:#222;font-weight:400;transform:scaleX(0.85);transform-origin:0 0;">VersaSTAT 4, SN: 14328090</div>
<div class="t" style="left:126.00px;top:425.12px;font-size:6.4px;color:#222;font-weight:400;transform:scaleX(0.82);transform-origin:0 0;">Cell OFF</div>
<div class="t" style="left:166.50px;top:425.12px;font-size:6.4px;color:#222;font-weight:400;transform:scaleX(0.85);transform-origin:0 0;">E = -6.317  V</div>
<div class="t" style="left:219.00px;top:425.12px;font-size:6.4px;color:#222;font-weight:400;transform:scaleX(0.82);transform-origin:0 0;">I = -247.143 pA</div>
<div class="t" style="left:273.00px;top:425.12px;font-size:6.4px;color:#222;font-weight:400;transform:scaleX(0.85);transform-origin:0 0;">20nA</div>
<div class="t" style="left:295.60px;top:425.12px;font-size:6.4px;color:#222;font-weight:400;transform:scaleX(0.82);transform-origin:0 0;">External</div>
<div class="t" style="left:421.00px;top:425.12px;font-size:6.4px;color:#222;font-weight:400;transform:scaleX(0.82);transform-origin:0 0;">Logged In: Security Disabled</div>
<div class="a" style="left:798.0px;top:431.0px;width:1.2px;height:1.2px;background:#b0ae9c"></div>
<div class="a" style="left:798.0px;top:428.5px;width:1.2px;height:1.2px;background:#b0ae9c"></div>
<div class="a" style="left:795.5px;top:431.0px;width:1.2px;height:1.2px;background:#b0ae9c"></div>
<div class="a" style="left:798.0px;top:426.0px;width:1.2px;height:1.2px;background:#b0ae9c"></div>
<div class="a" style="left:795.5px;top:428.5px;width:1.2px;height:1.2px;background:#b0ae9c"></div>
<div class="a" style="left:793.0px;top:431.0px;width:1.2px;height:1.2px;background:#b0ae9c"></div>
<div class="a" style="left:0;top:433.7px;width:800px;height:15.3px;background:linear-gradient(#2a5ad0 0,#3c8ef0 1.3px,#2a68e2 2.6px,#2258d8 4px,#2258d8 13px,#1a44b0 15.3px)"></div>
<div class="a" style="left:0;top:433.7px;width:47.6px;height:15.3px;border-radius:0 6px 6px 0;background:linear-gradient(#5cae5c 0,#3c963c 2px,#328c34 8px,#2e862e 12px,#246c26 15.3px)"></div>
<div class="a" style="left:6px;top:437.5px;width:3.6px;height:3.4px;background:#f05020;transform:skewY(-8deg)"></div>
<div class="a" style="left:10.2px;top:437px;width:3.6px;height:3.4px;background:#80d020;transform:skewY(-8deg)"></div>
<div class="a" style="left:6px;top:441.4px;width:3.6px;height:3.4px;background:#2080f0;transform:skewY(-8deg)"></div>
<div class="a" style="left:10.2px;top:440.9px;width:3.6px;height:3.4px;background:#f8d010;transform:skewY(-8deg)"></div>
<svg class="a" style="left:0;top:432px" width="50" height="17" viewBox="0 0 50 17"><g fill="none" stroke="#fff" stroke-width="0.9" stroke-linecap="round" opacity="0.95"><path d="M19.2 6.0 H25.8 M18.4 9.4 H26.4 M21.6 6.2 C21.6 10 20.8 12 18.8 13.6 M24.0 6.2 V13.8"/><path d="M29.2 5.2 C28.9 8 28.3 10.5 27.6 12.2 M27.4 8.4 H31.4 C31.0 10.8 29.8 12.6 27.8 13.8 M28.6 10.2 L31.2 13.2"/><path d="M34.6 5.0 L32.8 8.4 H37.4 M36.4 6.8 L37.8 8.6 M33.2 10.0 H37.4 V13.4 H33.2 Z"/></g></svg>
<div class="a" style="left:55px;top:437.5px;width:7.5px;height:7.5px;border-radius:50%;background:radial-gradient(circle at 40% 35%,#ffd080,#f08000 70%,#c06000);border:0.5px solid #fff"></div>
<div class="a" style="left:57.8px;top:439.5px;width:0;height:0;border-top:1.8px solid transparent;border-bottom:1.8px solid transparent;border-left:2.6px solid #fff"></div>
<div class="a" style="left:66px;top:437.3px;width:7px;height:7.5px;border-radius:1px;background:linear-gradient(135deg,#e8f4ff,#60a8f0 60%,#2060c0)"></div>
<div class="a" style="left:67.5px;top:439px;width:4px;height:4px;border-radius:50%;border:1.2px solid #1050c0"></div>
<div class="a" style="left:79.4px;top:435.3px;width:79.6px;height:12.5px;border-radius:2px;background:#1e4cc0;border:0.5px solid #1438a0;box-shadow:inset 1px 1px 1px #1030a0"></div>
<div class="a" style="left:84.2px;top:437.6px;width:7.70px;height:7.70px;background:#0a12c0;border-radius:1.2px;border:0.6px solid #c8d8ff"></div>
<div class="a" style="left:85.50px;top:438.80px;width:1.70px;height:5.60px;background:#fff;transform:skewX(22deg);border-radius:0.8px"></div>
<div class="a" style="left:88.80px;top:439.30px;width:2.00px;height:2.00px;background:#f0f4ff;border-radius:50%"></div>
<div class="t mono" style="left:94.50px;top:440.22px;font-size:5.0px;color:#fff;font-weight:bold;transform:scaleX(0.95);transform-origin:0 0;">VersaStudio - ceshi</div>
<div class="a" style="left:752.5px;top:433.7px;width:47.5px;height:15.3px;background:linear-gradient(#18a8f8,#0c98ec 15%,#0b90e4 80%,#0878cc);border-left:1px solid #1050b0"></div>
<div class="a" style="left:718px;top:439.3px;width:8px;height:5px;background:linear-gradient(#f0f0f0,#909090);border:0.5px solid #303030;border-radius:1px"></div>
<div class="a" style="left:730px;top:437.7px;width:7px;height:7.2px;background:#f8f0b0;border:0.6px solid #606040"></div>
<div class="a" style="left:731.8px;top:439px;width:3.4px;height:3px;border:1px solid #303030;border-radius:50% 50% 0 0"></div>
<div class="a" style="left:741.5px;top:437.3px;width:4px;height:2.5px;background:#b0c8f0"></div>
<div class="a" style="left:742px;top:442px;width:0;height:0;border-left:1.5px solid transparent;border-right:1.5px solid transparent;border-top:2px solid #d8e4f8"></div>
<div class="a" style="left:748.5px;top:437.8px;width:7.8px;height:7.8px;border-radius:50%;background:radial-gradient(circle at 40% 35%,#a0d8ff,#1878e0 70%,#0850b0);border:0.5px solid #d0e8ff"></div>
<div class="a" style="left:751.5px;top:440px;width:2.8px;height:2.8px;border-left:1px solid #fff;border-bottom:1px solid #fff;transform:rotate(45deg)"></div>
<div class="a" style="left:758px;top:437.8px;width:7.6px;height:7.6px;border-radius:50%;background:radial-gradient(circle at 40% 35%,#ffd890,#f89010 70%,#d06800)"></div>
<div class="a" style="left:760px;top:439.7px;width:3.6px;height:3.6px;border-radius:50%;border:1px solid #fff;border-top-color:transparent"></div>
<div class="a" style="left:767.5px;top:437.3px;width:7.5px;height:8px;border-radius:1px 1px 4px 4px;background:linear-gradient(#f0f8ff,#a8c8e8);border:0.6px solid #5080b0"></div>
<div class="a" style="left:769.5px;top:439.3px;width:2.5px;height:3.5px;border-right:1px solid #2060c0;border-bottom:1px solid #2060c0;transform:rotate(40deg)"></div>
<div class="t" style="left:780.00px;top:438.72px;font-size:6.4px;color:#e8f4ff;font-weight:400;transform:scaleX(0.9);transform-origin:0 0;">9:54</div>
</body></html>
